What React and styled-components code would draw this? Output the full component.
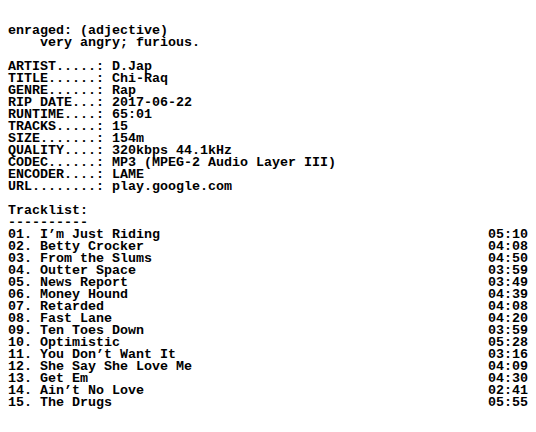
import React from "react";
import styled, { createGlobalStyle } from "styled-components";

const GlobalStyle = createGlobalStyle`
  html, body {
    margin: 0;
    padding: 0;
    background: #ffffff;
  }
`;

const Page = styled.div`
  width: 536px;
  box-sizing: border-box;
  padding: 25px 8px 0 8px;
  font-family: "Liberation Mono", "DejaVu Sans Mono", monospace;
  font-weight: bold;
  font-size: 13.333px;
  line-height: 12px;
  color: #000000;
  white-space: pre;
`;

const Line = styled.div`
  height: 12px;
  padding-left: ${(props) => (props.indent ? props.indent * 8 : 0)}px;
`;

const Blank = styled.div`
  height: 12px;
`;

const Section = styled.div`
  display: flex;
  flex-direction: column;
`;

const InfoRow = styled.div`
  display: flex;
  height: 12px;
`;

const Label = styled.span`
  width: 104px;
`;

const TrackRow = styled.div`
  display: flex;
  justify-content: space-between;
  height: 12px;
`;

const Duration = styled.span`
  width: 40px;
`;

const info = [
  ["ARTIST", "D.Jap"],
  ["TITLE", "Chi-Raq"],
  ["GENRE", "Rap"],
  ["RIP DATE", "2017-06-22"],
  ["RUNTIME", "65:01"],
  ["TRACKS", "15"],
  ["SIZE", "154m"],
  ["QUALITY", "320kbps 44.1kHz"],
  ["CODEC", "MP3 (MPEG-2 Audio Layer III)"],
  ["ENCODER", "LAME"],
  ["URL", "play.google.com"],
];

const tracks = [
  ["I\u2019m Just Riding", "05:10"],
  ["Betty Crocker", "04:08"],
  ["From the Slums", "04:50"],
  ["Outter Space", "03:59"],
  ["News Report", "03:49"],
  ["Money Hound", "04:39"],
  ["Retarded", "04:08"],
  ["Fast Lane", "04:20"],
  ["Ten Toes Down", "03:59"],
  ["Optimistic", "05:28"],
  ["You Don\u2019t Want It", "03:16"],
  ["She Say She Love Me", "04:09"],
  ["Get Em", "04:30"],
  ["Ain\u2019t No Love", "02:41"],
  ["The Drugs", "05:55"],
];

function App() {
  return (
    <Page>
      <GlobalStyle />
      <Section>
        <Line>enraged: (adjective)</Line>
        <Line indent={4}>very angry; furious.</Line>
      </Section>
      <Blank />
      <Section>
        {info.map(([key, value]) => (
          <InfoRow key={key}>
            <Label>{key.padEnd(11, ".") + ":"}</Label>
            <span>{value}</span>
          </InfoRow>
        ))}
      </Section>
      <Blank />
      <Section>
        <Line>Tracklist:</Line>
        <Line>----------</Line>
        {tracks.map(([title, time], i) => (
          <TrackRow key={title}>
            <span>{String(i + 1).padStart(2, "0") + ". " + title}</span>
            <Duration>{time}</Duration>
          </TrackRow>
        ))}
      </Section>
    </Page>
  );
}

export default App;
